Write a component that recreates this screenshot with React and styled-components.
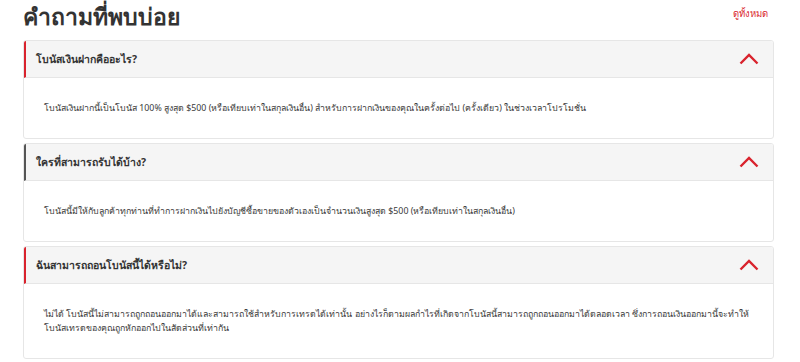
import styled, { createGlobalStyle } from 'styled-components';

const faqs = [
  {
    question: 'โบนัสเงินฝากคืออะไร?',
    answer:
      'โบนัสเงินฝากนี้เป็นโบนัส 100% สูงสุด $500 (หรือเทียบเท่าในสกุลเงินอื่น) สำหรับการฝากเงินของคุณในครั้งต่อไป (ครั้งเดียว) ในช่วงเวลาโปรโมชั่น',
    accent: 'red',
  },
  {
    question: 'ใครที่สามารถรับได้บ้าง?',
    answer:
      'โบนัสนี้มีให้กับลูกค้าทุกท่านที่ทำการฝากเงินไปยังบัญชีซื้อขายของตัวเองเป็นจำนวนเงินสูงสุด $500 (หรือเทียบเท่าในสกุลเงินอื่น)',
    accent: 'dark',
  },
  {
    question: 'ฉันสามารถถอนโบนัสนี้ได้หรือไม่?',
    answer:
      'ไม่ได้ โบนัสนี้ไม่สามารถถูกถอนออกมาได้และสามารถใช้สำหรับการเทรดได้เท่านั้น อย่างไรก็ตามผลกำไรที่เกิดจากโบนัสนี้สามารถถูกถอนออกมาได้ตลอดเวลา ซึ่งการถอนเงินออกมานี้จะทำให้โบนัสเทรดของคุณถูกหักออกไปในสัดส่วนที่เท่ากัน',
    accent: 'red',
  },
];

const GlobalStyle = createGlobalStyle`
  body {
    margin: 0;
    background: #fff;
    font-family: Tahoma, "Noto Sans", "DejaVu Sans", sans-serif;
    color: #333;
  }
`;

function ChevronUp() {
  return (
    <svg width="20" height="12" viewBox="0 0 20 12">
      <path
        d="M1.5 10.5 L10 2 L18.5 10.5"
        fill="none"
        stroke="#d9232d"
        strokeWidth="2.4"
      />
    </svg>
  );
}

function App() {
  return (
    <Wrapper>
      <GlobalStyle />
      <TopBar>
        <Title>คำถามที่พบบ่อย</Title>
        <SeeAll href="#">ดูทั้งหมด</SeeAll>
      </TopBar>
      <List>
        {faqs.map((item) => (
          <Card key={item.question}>
            <Header $accent={item.accent}>
              <Question>{item.question}</Question>
              <ChevronUp />
            </Header>
            <Answer>{item.answer}</Answer>
          </Card>
        ))}
      </List>
    </Wrapper>
  );
}

const Wrapper = styled.div`
  padding: 0 26px 0 23px;
`;

const TopBar = styled.div`
  display: flex;
  justify-content: space-between;
  align-items: flex-start;
  height: 40px;
`;

const Title = styled.h1`
  margin: 0;
  padding-top: 2px;
  font-size: 23px;
  line-height: 28px;
  font-weight: 700;
  color: #333;
`;

const SeeAll = styled.a`
  margin-top: 6px;
  margin-right: 6px;
  font-size: 9.5px;
  color: #d9232d;
  text-decoration: none;
`;

const List = styled.div`
  display: flex;
  flex-direction: column;
  gap: 4px;
`;

const Card = styled.div`
  border: 1px solid #e6e6e6;
  border-radius: 3px;
  background: #fff;
  overflow: hidden;
`;

const Header = styled.div`
  display: flex;
  align-items: center;
  justify-content: space-between;
  height: 36px;
  padding: 0 14px 0 10px;
  background: #f5f5f5;
  border-bottom: 1px solid #e6e6e6;
  border-left: 2px solid ${(p) => (p.$accent === 'red' ? '#d9232d' : '#555')};
`;

const Question = styled.div`
  font-size: 10.5px;
  font-weight: 700;
  color: #333;
`;

const Answer = styled.div`
  padding: 23px 20px;
  font-size: 8.8px;
  line-height: 14px;
  color: #3a3a3a;
`;

export default App;
